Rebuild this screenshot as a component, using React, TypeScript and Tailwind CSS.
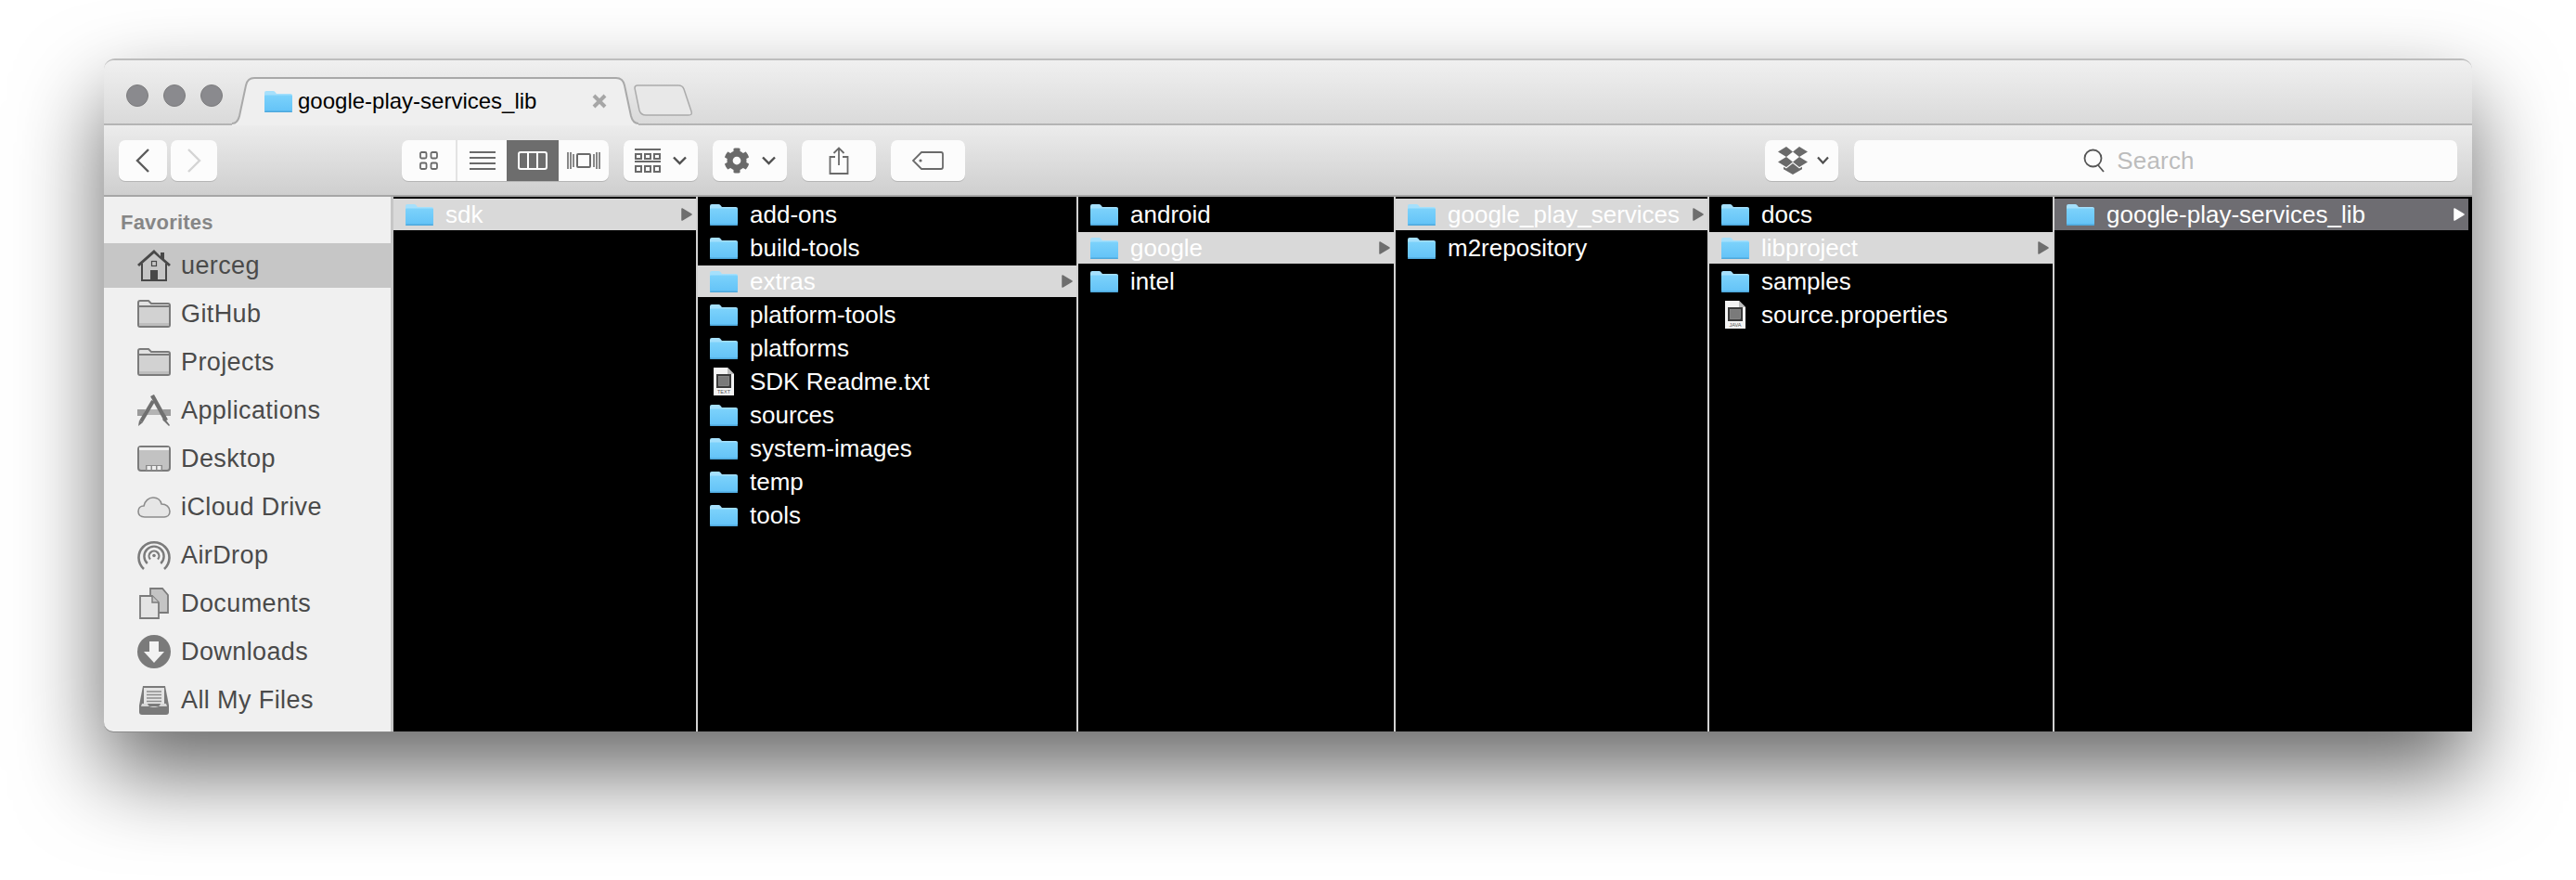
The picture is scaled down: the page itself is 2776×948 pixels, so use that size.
import React from "react";
import { FaCog } from "react-icons/fa";

const font = "font-['Liberation_Sans',Arial,sans-serif]";

function BlueFolder() {
  return (
    <svg width="30" height="24" viewBox="0 0 30 24" className="shrink-0">
      <defs>
        <linearGradient id="bf" x1="0" y1="0" x2="0" y2="1">
          <stop offset="0" stopColor="#7cd2fb" />
          <stop offset="1" stopColor="#62c2f7" />
        </linearGradient>
      </defs>
      <path d="M0 3a2 2 0 0 1 2-2h7.5a2 2 0 0 1 1.4.6L13 4h15a2 2 0 0 1 2 2v6H0z" fill="#a5e0fc" />
      <path d="M0 6.5a1 1 0 0 1 1-1h28a1 1 0 0 1 1 1V22a2 2 0 0 1-2 2H2a2 2 0 0 1-2-2z" fill="url(#bf)" />
      <rect x="0" y="22.6" width="30" height="1.4" rx="0.7" fill="#4ea8dc" />
    </svg>
  );
}

function DocIcon({ label }: { label: string }) {
  return (
    <svg width="24" height="30" viewBox="0 0 24 30" className="shrink-0 ml-[3px] mr-[3px]">
      <path d="M1 0h15l7 7v23H1z" fill="#f4f4f4" />
      <path d="M16 0v7h7z" fill="#bdbdbd" />
      <rect x="4" y="7" width="16" height="15" fill="#3a3a3a" />
      <rect x="6.5" y="9.5" width="11" height="10" fill="#7a7a7a" stroke="#a0a0a0" strokeWidth="0.6" />
      <text x="12" y="28" textAnchor="middle" fontSize="5.5" fill="#555" fontFamily="Liberation Sans">{label}</text>
    </svg>
  );
}

const G = "#7b7b7b";

function HomeIcon() {
  return (
    <svg width="36" height="34" viewBox="0 0 36 34">
      <path d="M18 0 0 16l2 2L18 4l16 14 2-2-7-6V3h-4v4z" fill="#484848" />
      <path d="M5 15v18h26V15" fill="none" stroke="#484848" strokeWidth="2" />
      <rect x="14" y="22" width="8" height="11" fill="#484848" />
      <rect x="15.5" y="12.5" width="5" height="5" fill="none" stroke="#484848" strokeWidth="1.2" />
    </svg>
  );
}

function GrayFolder() {
  return (
    <svg width="36" height="30" viewBox="0 0 36 30">
      <path d="M1 3a2 2 0 0 1 2-2h9l3 3h18a2 2 0 0 1 2 2v21a2 2 0 0 1-2 2H3a2 2 0 0 1-2-2z" fill="#e2e2e2" stroke={G} strokeWidth="2" />
      <path d="M1 7h34" stroke={G} strokeWidth="2" />
      <rect x="2" y="8" width="32" height="17" fill="#d2d2d2" />
      <rect x="2" y="25" width="32" height="3" fill="#bdbdbd" />
    </svg>
  );
}

function AppsIcon() {
  return (
    <svg width="36" height="34" viewBox="0 0 36 34">
      <path d="M0 16h9l-3 7H0zM27 16h9v7h-6z" fill="#9a9a9a" />
      <path d="M12 16h12l3 6H9z" fill="#b4b4b4" />
      <path d="M16 1 31 28" stroke="#707070" strokeWidth="4.5" />
      <path d="M29 25l6 8-1 1-7-7z" fill="#707070" />
      <path d="M17 7 4 29" stroke="#707070" strokeWidth="4.2" />
      <path d="M1 34l1-6 4 2z" fill="#707070" />
    </svg>
  );
}

function DesktopIcon() {
  return (
    <svg width="36" height="28" viewBox="0 0 36 28">
      <rect x="1" y="1" width="34" height="26" rx="3" fill="#c2c2c2" stroke={G} strokeWidth="2" />
      <rect x="2" y="2" width="32" height="3" fill="#f0f0f0" />
      <rect x="9" y="21" width="18" height="6" fill="#8a8a8a" />
      <rect x="10.5" y="22" width="4" height="4" fill="#eee" />
      <rect x="16" y="22" width="4" height="4" fill="#eee" />
      <rect x="21.5" y="22" width="4" height="4" fill="#eee" />
    </svg>
  );
}

function CloudIcon() {
  return (
    <svg width="36" height="24" viewBox="0 0 36 24">
      <path d="M8 23C3 23 1 20 1 17c0-3 2-6 6-6 1-5 5-9 10-9 5 0 8 3 9 7 5 0 9 3 9 8 0 4-3 6-6 6z" fill="#e6e6e6" stroke="#8c8c8c" strokeWidth="1.6" />
    </svg>
  );
}

function AirDropIcon() {
  return (
    <svg width="36" height="34" viewBox="0 0 36 34" fill="none" stroke={G}>
      <path d="M7 32A16.5 16.5 0 1 1 29 32" strokeWidth="2.6" />
      <path d="M10.8 26A10.6 10.6 0 1 1 25.2 26" strokeWidth="2.4" />
      <path d="M14 21.6A5.4 5.4 0 1 1 22 21.6" strokeWidth="2.2" />
      <circle cx="18" cy="17.5" r="1.8" fill={G} stroke="none" />
    </svg>
  );
}

function DocsIcon() {
  return (
    <svg width="32" height="34" viewBox="0 0 32 34">
      <path d="M12 1h13l6 7v19H12z" fill="#c4c4c4" stroke={G} strokeWidth="1.8" />
      <path d="M1 9h13l7 7v17H1z" fill="#e4e4e4" stroke={G} strokeWidth="1.8" />
      <path d="M14 9v7h7" fill="#c4c4c4" stroke={G} strokeWidth="1.4" />
    </svg>
  );
}

function DownloadIcon() {
  return (
    <svg width="36" height="36" viewBox="0 0 36 36">
      <circle cx="18" cy="18" r="18" fill="#7a7a7a" />
      <path d="M13 7h10v11h6L18 30 7 18h6z" fill="#f2f2f2" />
    </svg>
  );
}

function FilesIcon() {
  return (
    <svg width="32" height="32" viewBox="0 0 32 32">
      <path d="M4 1h24l4 21v7a3 3 0 0 1-3 3H3a3 3 0 0 1-3-3v-7z" fill="#7a7a7a" />
      <rect x="5" y="3" width="22" height="17" fill="#e4e4e4" />
      <path d="M8 7h16M8 10.5h16M8 14h16M8 17.5h16" stroke="#8c8c8c" strokeWidth="1.4" />
      <path d="M3 20h6c1 3 3 4 7 4s6-1 7-4h6l1 3H2z" fill="#d8d8d8" />
    </svg>
  );
}

function Chevron() {
  return (
    <svg width="15" height="10" viewBox="0 0 15 10" fill="none" stroke="#4f4f4f" strokeWidth="2.4">
      <path d="M1 1.5 7.5 8 14 1.5" />
    </svg>
  );
}

function Btn({ className, children }: { className: string; children: React.ReactNode }) {
  return (
    <div className={`h-[44px] flex items-center justify-center bg-[#fcfcfc] rounded-[7px] shadow-[0_1px_0_#b5b5b5] shrink-0 ${className}`}>
      {children}
    </div>
  );
}

const sidebar: [string, React.ReactNode][] = [
  ["uerceg", <HomeIcon />],
  ["GitHub", <GrayFolder />],
  ["Projects", <GrayFolder />],
  ["Applications", <AppsIcon />],
  ["Desktop", <DesktopIcon />],
  ["iCloud Drive", <CloudIcon />],
  ["AirDrop", <AirDropIcon />],
  ["Documents", <DocsIcon />],
  ["Downloads", <DownloadIcon />],
  ["All My Files", <FilesIcon />],
];

type Item = { name: string; sel?: "dim" | "on"; doc?: string };

const columns: { width: string; items: Item[] }[] = [
  { width: "w-[328px]", items: [{ name: "sdk", sel: "dim" }] },
  {
    width: "w-[410px]",
    items: [
      { name: "add-ons" },
      { name: "build-tools" },
      { name: "extras", sel: "dim" },
      { name: "platform-tools" },
      { name: "platforms" },
      { name: "SDK Readme.txt", doc: "TEXT" },
      { name: "sources" },
      { name: "system-images" },
      { name: "temp" },
      { name: "tools" },
    ],
  },
  { width: "w-[342px]", items: [{ name: "android" }, { name: "google", sel: "dim" }, { name: "intel" }] },
  { width: "w-[338px]", items: [{ name: "google_play_services", sel: "dim" }, { name: "m2repository" }] },
  {
    width: "w-[372px]",
    items: [{ name: "docs" }, { name: "libproject", sel: "dim" }, { name: "samples" }, { name: "source.properties", doc: "JAVA" }],
  },
];

function Row({ item }: { item: Item }) {
  const bg = item.sel === "dim" ? "bg-[#d9d9d9]" : item.sel === "on" ? "bg-[#6e6d72]" : "";
  return (
    <div className={`h-[34px] flex items-center gap-[13px] pl-[13px] pr-[3px] text-white text-[26px] leading-[34px] ${bg}`}>
      {item.doc ? <DocIcon label={item.doc} /> : <BlueFolder />}
      <span className="flex-1 whitespace-nowrap">{item.name}</span>
      {item.sel && (
        <svg width="14" height="16" viewBox="0 0 14 16" className="shrink-0">
          <path d="M2 2 12 8 2 14z" fill={item.sel === "on" ? "#ffffff" : "#6e6e6e"} stroke={item.sel === "on" ? "#ffffff" : "#6e6e6e"} strokeWidth="1.5" strokeLinejoin="round" />
        </svg>
      )}
    </div>
  );
}

export default function App() {
  return (
    <div className={`w-[2776px] h-[948px] bg-white pl-[112px] pt-[63px] overflow-hidden ${font}`}>
      <div className="w-[2552px] h-[725px] flex flex-col rounded-t-[12px] rounded-bl-[10px] shadow-[0_44px_94px_rgba(0,0,0,0.6)] bg-[#ececec] border-t-2 border-[#bdbdbd]">
        {/* Title bar */}
        <div className="h-[70px] flex items-end rounded-t-[10px] bg-gradient-to-b from-[#f0f0f0] to-[#dadada] border-b-2 border-[#b4b4b4] shrink-0">
          <div className="self-start mt-[26px] ml-[24px] flex gap-[16px]">
            <div className="w-[24px] h-[24px] rounded-full bg-[#8a8a8e] border border-[#7c7c7e]" />
            <div className="w-[24px] h-[24px] rounded-full bg-[#8a8a8e] border border-[#7c7c7e]" />
            <div className="w-[24px] h-[24px] rounded-full bg-[#8a8a8e] border border-[#7c7c7e]" />
          </div>
          <div className="relative w-[438px] h-[52px] ml-[10px] -mb-[2px] flex items-center pl-[35px] pr-[34px] gap-[6px] shrink-0">
            <svg width="438" height="52" viewBox="0 0 438 52" className="absolute inset-0">
              <path d="M0 50C5 50 7 46 8 42L15 9C16 4 19 1 24 1H414C419 1 422 4 423 9L430 42C431 46 433 50 438 50V52H0z" fill="#efefef" />
              <path d="M0 50C5 50 7 46 8 42L15 9C16 4 19 1 24 1H414C419 1 422 4 423 9L430 42C431 46 433 50 438 50" fill="none" stroke="#a9a9a9" strokeWidth="2" />
            </svg>
            <div className="relative shrink-0"><BlueFolder /></div>
            <span className="relative text-[24px] leading-[30px] text-black whitespace-nowrap flex-1">google-play-services_lib</span>
            <svg width="16" height="16" viewBox="0 0 16 16" className="relative shrink-0">
              <path d="M2 2 14 14M14 2 2 14" stroke="#a6a6a6" strokeWidth="4" />
            </svg>
          </div>
          <svg width="64" height="34" viewBox="0 0 64 34" className="shrink-0 -ml-[5px] mb-[8px]">
            <path d="M1 4C1 2 2 1 4 1H48C51 1 53 2 54 5L62 29C63 32 62 33 59 33H13C9 33 7 31 6 28z" fill="#e8e8e8" stroke="#ababab" strokeWidth="1.5" />
          </svg>
        </div>

        {/* Toolbar */}
        <div className="h-[77px] flex items-center pl-[16px] pr-[16px] bg-gradient-to-b from-[#ececec] to-[#cfcfcf] border-b-2 border-[#a6a6a6] shrink-0">
          <Btn className="w-[52px]">
            <svg width="16" height="26" viewBox="0 0 16 26" fill="none" stroke="#5c5c5c" strokeWidth="2.4"><path d="M14 1 2 13l12 12" /></svg>
          </Btn>
          <Btn className="w-[50px] ml-[4px]">
            <svg width="16" height="26" viewBox="0 0 16 26" fill="none" stroke="#d4d4d4" strokeWidth="2.4"><path d="M2 1l12 12L2 25" /></svg>
          </Btn>
          <div className="ml-[199px] h-[44px] w-[223px] flex rounded-[7px] bg-[#fcfcfc] shadow-[0_1px_0_#b5b5b5] overflow-hidden shrink-0">
            <div className="w-[60px] flex items-center justify-center border-r-2 border-[#e3e3e3]">
              <svg width="20" height="20" viewBox="0 0 20 20" fill="none" stroke="#6a6a6a" strokeWidth="1.8">
                <rect x="1" y="1" width="6.5" height="6.5" rx="1.5" /><rect x="12.5" y="1" width="6.5" height="6.5" rx="1.5" />
                <rect x="1" y="12.5" width="6.5" height="6.5" rx="1.5" /><rect x="12.5" y="12.5" width="6.5" height="6.5" rx="1.5" />
              </svg>
            </div>
            <div className="w-[53px] flex items-center justify-center">
              <svg width="28" height="20" viewBox="0 0 28 20" stroke="#6a6a6a" strokeWidth="2"><path d="M0 1h28M0 7h28M0 13h28M0 19h28" /></svg>
            </div>
            <div className="w-[56px] flex items-center justify-center bg-[#6d6d6d]">
              <svg width="32" height="20" viewBox="0 0 32 20" fill="none" stroke="#ffffff" strokeWidth="2"><rect x="1" y="1" width="30" height="18" rx="2" /><path d="M11 1v18M21 1v18" /></svg>
            </div>
            <div className="w-[54px] flex items-center justify-center">
              <svg width="36" height="20" viewBox="0 0 36 20" fill="none" stroke="#6a6a6a" strokeWidth="1.6">
                <rect x="11" y="3" width="14" height="14" rx="1" strokeWidth="2" />
                <path d="M1 1v18M4 1v18M7 3v14M29 3v14M32 1v18M35 1v18" />
              </svg>
            </div>
          </div>
          <Btn className="w-[80px] ml-[16px] gap-[13px]">
            <svg width="28" height="26" viewBox="0 0 28 26" fill="none" stroke="#6a6a6a" strokeWidth="2">
              <path d="M0 1h28M0 14h28" />
              <rect x="1" y="6" width="6" height="5" /><rect x="11" y="6" width="6" height="5" /><rect x="21" y="6" width="6" height="5" />
              <rect x="1" y="19" width="6" height="6" /><rect x="11" y="19" width="6" height="6" /><rect x="21" y="19" width="6" height="6" />
            </svg>
            <Chevron />
          </Btn>
          <Btn className="w-[80px] ml-[16px] gap-[13px]">
            <FaCog className="w-[28px] h-[28px] text-[#6a6a6a]" />
            <Chevron />
          </Btn>
          <Btn className="w-[80px] ml-[16px]">
            <svg width="22" height="30" viewBox="0 0 22 30" fill="none" stroke="#6a6a6a" strokeWidth="1.8">
              <path d="M7 11H1.5v18h19V11H15M11 20V1.5M5.5 7 11 1.5 16.5 7" />
            </svg>
          </Btn>
          <Btn className="w-[80px] ml-[16px]">
            <svg width="34" height="20" viewBox="0 0 34 20" fill="none" stroke="#6a6a6a" strokeWidth="1.8">
              <path d="M10 1h21a2 2 0 0 1 2 2v14a2 2 0 0 1-2 2H10L1 10z" />
              <circle cx="9" cy="10" r="1.6" fill="#6a6a6a" stroke="none" />
            </svg>
          </Btn>
          <div className="flex-1" />
          <Btn className="w-[79px] gap-[10px] pl-[4px]">
            <svg width="32" height="30" viewBox="0 0 32 30" fill="#6a6a6a">
              <path d="M9 0l7 5.5-7 5.5L0 5.5zM23 0l9 5.5L23 11l-7-5.5zM0 16.5 9 11l7 5.5L9 22zM32 16.5 23 22l-7-5.5L23 11z" />
              <path d="M16 18l7 5.5 3-1.8v2.5L16 30 6 24.2v-2.5l3 1.8z" />
            </svg>
            <svg width="13" height="9" viewBox="0 0 13 9" fill="none" stroke="#4f4f4f" strokeWidth="2.2"><path d="M1 1.5l5.5 6 5.5-6" /></svg>
          </Btn>
          <Btn className="w-[650px] ml-[17px] pr-[36px] gap-[12px]">
            <svg width="24" height="26" viewBox="0 0 24 26" fill="none" stroke="#555" strokeWidth="1.8">
              <circle cx="10.5" cy="10.5" r="9" /><path d="M16 18l6 7" />
            </svg>
            <span className="text-[26px] tracking-[0.2px] leading-[30px] text-[#bcbcbc]">Search</span>
          </Btn>
        </div>

        {/* Body */}
        <div className="h-[576px] flex rounded-bl-[10px]">
          <aside className="w-[312px] shrink-0 bg-[#f0f0f0] border-r-[3px] border-[#c6c6c6] rounded-bl-[10px] shadow-[0_1px_0_#8a8a8a] flex flex-col">
            <div className="pt-[16px] pl-[18px] mb-[10px] text-[22px] tracking-[0.2px] leading-[24px] font-bold text-[#868686]">Favorites</div>
            <div className="flex flex-col gap-[4px]">
              {sidebar.map(([name, icon], i) => (
                <div key={name} className={`h-[48px] flex items-center pl-[36px] ${i === 0 ? "bg-[#c6c6c6]" : ""}`}>
                  <div className="w-[36px] flex items-center justify-center shrink-0">{icon}</div>
                  <span className="ml-[11px] text-[27px] tracking-[0.4px] leading-[32px] text-[#4a4a4a] whitespace-nowrap">{name}</span>
                </div>
              ))}
            </div>
          </aside>
          {columns.map((col, i) => (
            <div key={i} className={`${col.width} shrink-0 bg-black border-r-2 border-[#d2d2d2] pt-[2px] flex flex-col gap-[2px]`}>
              {col.items.map((it) => <Row key={it.name} item={it} />)}
            </div>
          ))}
          <div className="flex-1 bg-black pt-[2px] pr-[4px]">
            <Row item={{ name: "google-play-services_lib", sel: "on" }} />
          </div>
        </div>
      </div>
    </div>
  );
}
